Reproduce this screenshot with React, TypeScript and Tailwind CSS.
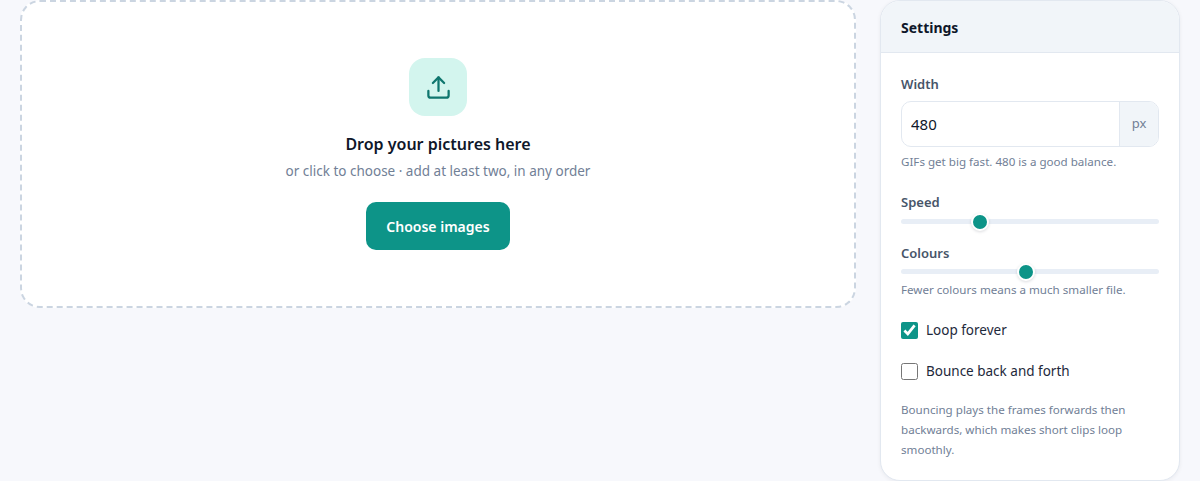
import { useState } from 'react'
import { Upload } from 'lucide-react'

const sliderClass =
  'block w-full h-[5px] rounded-full bg-[#e8eef6] appearance-none cursor-pointer [&::-webkit-slider-thumb]:appearance-none [&::-webkit-slider-thumb]:w-[18px] [&::-webkit-slider-thumb]:h-[18px] [&::-webkit-slider-thumb]:rounded-full [&::-webkit-slider-thumb]:bg-[#0d9488] [&::-webkit-slider-thumb]:border-2 [&::-webkit-slider-thumb]:border-white [&::-webkit-slider-thumb]:shadow-[0_1px_3px_rgba(15,23,42,0.15)]'

function Check({ label, checked, onChange }: { label: string; checked: boolean; onChange: (v: boolean) => void }) {
  return (
    <label className="flex items-center gap-2 text-[13.5px] leading-[18px] text-[#1e293b] cursor-pointer">
      <input
        type="checkbox"
        checked={checked}
        onChange={e => onChange(e.target.checked)}
        className="w-[17px] h-[17px] m-0 accent-[#0d9488]"
      />
      <span>{label}</span>
    </label>
  )
}

export default function App() {
  const [width, setWidth] = useState('480')
  const [speed, setSpeed] = useState(29)
  const [colours, setColours] = useState(48.5)
  const [loop, setLoop] = useState(true)
  const [bounce, setBounce] = useState(false)

  return (
    <div className="min-h-[481px] h-[481px] overflow-hidden bg-[#f7f8fc] pl-5 pr-5 flex items-start gap-6 font-['Noto_Sans',sans-serif]">
      <div className="flex-1 h-[308px] bg-white rounded-[20px] border-2 border-dashed border-[#cbd5e1] flex flex-col items-center pt-[56px]">
        <div className="w-[58px] h-[58px] rounded-2xl bg-[#d3f5ee] flex items-center justify-center text-[#0f766e]">
          <Upload size={27} strokeWidth={2} />
        </div>
        <h2 className="mt-[16px] text-[16px] leading-[24px] font-semibold text-[#0f172a]">Drop your pictures here</h2>
        <p className="mt-[5px] text-[13.5px] leading-[20px] text-[#718096]">or click to choose · add at least two, in any order</p>
        <button className="mt-[21px] w-[144px] h-[48px] rounded-[10px] bg-[#0d9488] text-white text-[14px] font-semibold">
          Choose images
        </button>
      </div>

      <aside className="w-[300px] h-[481px] shrink-0 bg-white rounded-[20px] border border-[#e2e8f0] overflow-hidden shadow-[0_1px_4px_rgba(15,23,42,0.06)]">
        <div className="h-[52px] px-5 pt-px flex items-center bg-[#f1f5f9] border-b border-[#e2e8f0] text-[14px] font-bold text-[#0f172a]">
          Settings
        </div>
        <div className="px-5 pt-[22px]">
          <div className="text-[13px] leading-[18px] font-semibold text-[#475569]">Width</div>
          <div className="mt-[8px] h-[46px] flex border border-[#e2e8f0] rounded-[10px] overflow-hidden">
            <input
              value={width}
              onChange={e => setWidth(e.target.value)}
              className="flex-1 min-w-0 px-[9px] text-[15px] text-[#0f172a] outline-none"
            />
            <span className="w-[39px] flex items-center justify-center bg-[#f1f5f9] border-l border-[#e2e8f0] text-[13px] text-[#718096]">px</span>
          </div>
          <p className="mt-[7px] text-[11.6px] leading-[16px] text-[#718096]">GIFs get big fast. 480 is a good balance.</p>

          <div className="mt-[23px] text-[13px] leading-[18px] font-semibold text-[#475569]">Speed</div>
          <div className="mt-[8px]">
            <input type="range" min={0} max={100} value={speed} onChange={e => setSpeed(+e.target.value)} className={sliderClass} />
          </div>

          <div className="mt-[20px] text-[13px] leading-[18px] font-semibold text-[#475569]">Colours</div>
          <div className="mt-[7px]">
            <input type="range" min={0} max={100} step={0.5} value={colours} onChange={e => setColours(+e.target.value)} className={sliderClass} />
          </div>
          <p className="mt-[8px] text-[11.6px] leading-[16px] text-[#718096]">Fewer colours means a much smaller file.</p>

          <div className="mt-[23px] flex flex-col gap-[23px]">
            <Check label="Loop forever" checked={loop} onChange={setLoop} />
            <Check label="Bounce back and forth" checked={bounce} onChange={setBounce} />
          </div>

          <p className="mt-[20px] text-[11.6px] leading-[20px] text-[#718096]">
            Bouncing plays the frames forwards then backwards, which makes short clips loop smoothly.
          </p>
        </div>
      </aside>
    </div>
  )
}
